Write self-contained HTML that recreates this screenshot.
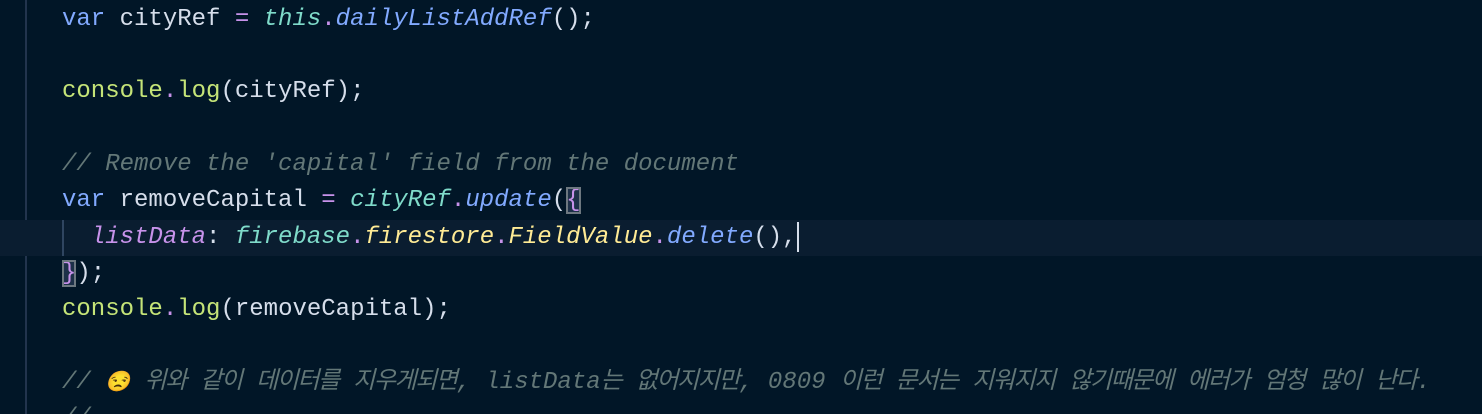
<!DOCTYPE html>
<html><head><meta charset="utf-8"><style>
html,body{margin:0;padding:0;background:#011627;width:1482px;height:414px;overflow:hidden}
.ed{position:relative;width:1482px;height:414px;font-family:"Liberation Mono","Noto Sans CJK KR",monospace;font-size:24px;color:#d6deeb}
.l{position:absolute;left:62px;height:36px;line-height:36px;white-space:pre}
.g{position:absolute;left:25px;top:0;width:2px;height:414px;background:#22344d}
.cur{position:absolute;left:0;top:220px;width:1482px;height:36px;background:#0a1d30}
.k{color:#82aaff}.o{color:#c792ea}.t{color:#7fdbca;font-style:italic}.f{color:#82aaff;font-style:italic}
.c{color:#c5e478}.cm{color:#637777;font-style:italic}.y{color:#ffeb95;font-style:italic}.p{color:#c792ea;font-style:italic}
.b{outline:2px solid #6d7880;outline-offset:-2px;background:#1d3048}
.kr{letter-spacing:-1.4px;word-spacing:1.4px}
</style></head><body><div class="ed">
<div class="g"></div>
<div class="cur"></div>
<div style="position:absolute;left:62px;top:220px;width:2px;height:36px;background:#2f4560"></div>
<div class="l" style="top:2px"><span class="k">var</span> cityRef <span class="o">=</span> <span class="t">this</span><span class="o">.</span><span class="f">dailyListAddRef</span>();</div>
<div class="l" style="top:74px"><span class="c">console</span><span class="o">.</span><span class="c">log</span>(cityRef);</div>
<div class="l" style="top:147px"><span class="cm">// Remove the 'capital' field from the document</span></div>
<div class="l" style="top:183px"><span class="k">var</span> removeCapital <span class="o">=</span> <span class="t">cityRef</span><span class="o">.</span><span class="f">update</span>(<span class="b o">{</span></div>
<div class="l" style="top:220px">  <span class="p">listData</span>: <span class="t">firebase</span><span class="o">.</span><span class="y">firestore</span><span class="o">.</span><span class="y">FieldValue</span><span class="o">.</span><span class="f">delete</span>(),<span style="display:inline-block;width:2px;height:30px;background:#d6deeb;vertical-align:middle"></span></div>
<div class="l" style="top:256px"><span class="b o">}</span>);</div>
<div class="l" style="top:292px"><span class="c">console</span><span class="o">.</span><span class="c">log</span>(removeCapital);</div>
<div class="l" style="top:365px"><span class="cm">// <span style="font-size:20px">😒</span> <span class="kr">위와 같이 데이터를 지우게되면</span>, listData<span class="kr">는 없어지지만</span>, 0809 <span class="kr">이런 문서는 지워지지 않기때문에 에러가 엄청 많이 난다</span>.</span></div>
<div class="l" style="top:401px"><span class="cm">//</span></div>
</div></body></html>
